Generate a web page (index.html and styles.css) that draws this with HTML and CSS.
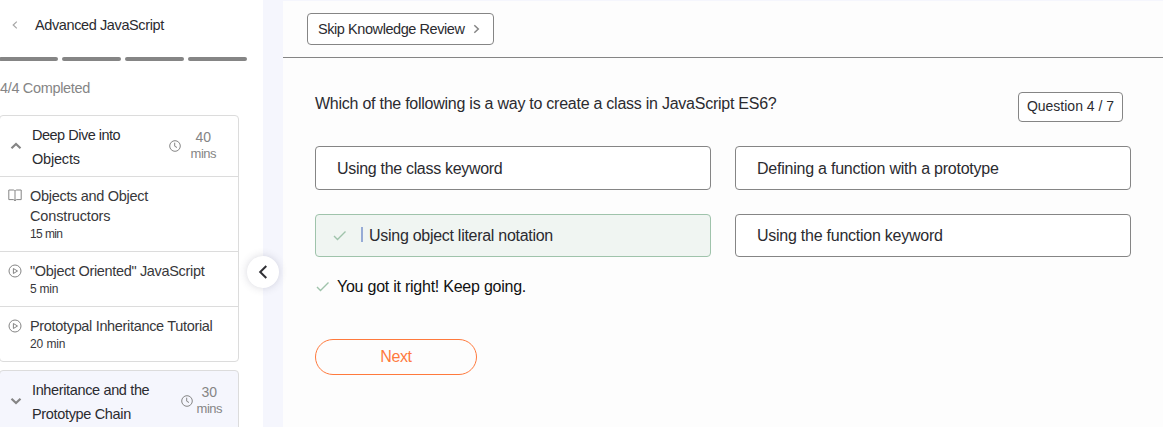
FILE: index.html
```html
<!DOCTYPE html>
<html lang="en">
<head>
<meta charset="utf-8">
<title>Advanced JavaScript</title>
<link rel="stylesheet" href="styles.css">
</head>
<body>
<div class="app">
  <aside class="sidebar">
    <header class="course">
      <svg class="back" width="6" height="8" viewBox="0 0 6 8"><path d="M4.8.6 1.2 4l3.6 3.4"/></svg>
      <h1><span class="t-course">Advanced JavaScript</span></h1>
    </header>
    <div class="progress"><i></i><i></i><i></i><i></i></div>
    <p class="completed"><span class="t-completed">4/4 Completed</span></p>

    <section class="card">
      <div class="card-head">
        <svg class="caret" width="12" height="8" viewBox="0 0 12 8"><path d="M1.5 6.2 6 2l4.5 4.2"/></svg>
        <h2><span class="t-deep">Deep Dive into</span><br><span class="t-obj">Objects</span></h2>
        <svg class="clock" width="12" height="12" viewBox="0 0 12 12"><circle cx="6" cy="6" r="5.3"/><path d="M5.7 2.7v3.5l2.3 1.3"/></svg>
        <p class="mins"><span class="t-num">40</span><br><span class="t-mins">mins</span></p>
      </div>
      <div class="lesson">
        <svg class="icon" width="14" height="13" viewBox="0 0 14 13"><path d="M7 2.2C6.6 1.3 6 1 5 1H.8v9.6H5.3c1 0 1.5.4 1.7 1.3.2-.9.7-1.3 1.7-1.3h4.5V1H9C8 1 7.4 1.3 7 2.2zv9.7"/></svg>
        <div><p class="name"><span class="t-l1">Objects and Object</span><br><span class="t-l2">Constructors</span></p><p class="time"><span class="t-15">15 min</span></p></div>
      </div>
      <div class="lesson">
        <svg class="icon" width="14" height="14" viewBox="0 0 14 14"><circle cx="7" cy="7" r="6"/><path d="M5.4 4.5v5L9.5 7z"/></svg>
        <div><p class="name"><span class="t-l3">"Object Oriented" JavaScript</span></p><p class="time"><span class="t-5">5 min</span></p></div>
      </div>
      <div class="lesson">
        <svg class="icon" width="14" height="14" viewBox="0 0 14 14"><circle cx="7" cy="7" r="6"/><path d="M5.4 4.5v5L9.5 7z"/></svg>
        <div><p class="name"><span class="t-l4">Prototypal Inheritance Tutorial</span></p><p class="time"><span class="t-20">20 min</span></p></div>
      </div>
    </section>

    <section class="card closed">
      <div class="card-head">
        <svg class="caret" width="12" height="8" viewBox="0 0 12 8"><path d="M1.5 1.8 6 6l4.5-4.2"/></svg>
        <h2><span class="t-inh">Inheritance and the</span><br><span class="t-chain">Prototype Chain</span></h2>
        <svg class="clock" width="12" height="12" viewBox="0 0 12 12"><circle cx="6" cy="6" r="5.3"/><path d="M5.7 2.7v3.5l2.3 1.3"/></svg>
        <p class="mins"><span class="t-num">30</span><br><span class="t-mins">mins</span></p>
      </div>
    </section>
  </aside>

  <div class="gutter">
    <button class="collapse"><svg width="10" height="16" viewBox="0 0 10 16"><path d="M8.3 2 2.2 8l6.1 6"/></svg></button>
  </div>

  <main class="main">
    <div class="toolbar">
      <button class="skip"><span class="t-skip">Skip Knowledge Review</span><svg width="7" height="10" viewBox="0 0 7 10"><path d="M1.3 1.2 5.3 5l-4 3.8"/></svg></button>
    </div>
    <div class="quiz">
      <div class="question">
        <p><span class="t-q">Which of the following is a way to create a class in JavaScript ES6?</span></p>
        <span class="count">Question 4 / 7</span>
      </div>
      <div class="answers">
        <div class="answer first"><span class="t-a1">Using the class keyword</span></div>
        <div class="answer first"><span class="t-a2">Defining a function with a prototype</span></div>
        <div class="answer right"><svg class="check" width="14" height="11" viewBox="0 0 14 11"><path d="M1 6 4.5 9.5 12.5 1.5"/></svg><i class="cursor"></i><span class="t-a3">Using object literal notation</span></div>
        <div class="answer"><span class="t-a4">Using the function keyword</span></div>
      </div>
      <p class="feedback"><svg class="check" width="14" height="11" viewBox="0 0 14 11"><path d="M1 6 4.5 9.5 12.5 1.5"/></svg><span class="t-fb">You got it right! Keep going.</span></p>
      <button class="next"><span class="t-next">Next</span></button>
    </div>
  </main>
</div>
</body>
</html>
```
FILE: styles.css
```css
* { box-sizing: border-box; margin: 0; padding: 0; }
body { font-family: "Liberation Sans", Arial, sans-serif; color: #2b2b30; background: #f5f6fd; }
span { white-space: nowrap; }
svg { fill: none; stroke: #858585; flex: none; }
button { font: inherit; color: inherit; background: none; }
h1, h2 { font-weight: 400; }
.app { display: flex; width: 1163px; height: 427px; overflow: hidden; }

.sidebar { width: 263px; height: 427px; background: #fff; overflow: hidden; flex: none; }
.course { display: flex; align-items: center; height: 50px; padding-left: 12px; }
.course .back { stroke: #a6a6a6; stroke-width: 1.2; }
.course h1 { margin-left: 17px; font-size: 14.5px; line-height: 20px; }
.progress { display: flex; gap: 4px; margin: 7px 0 0 -1px; }
.progress i { width: 59px; height: 4px; border-radius: 2px; background: #858585; }
.completed { margin-top: 17px; font-size: 14.5px; line-height: 20px; color: #858585; }
.card { width: 240px; margin: 17px 0 0 -1px; border: 1px solid #dcdcdc; border-radius: 4px; background: #fff; }
.card.closed { margin-top: 8px; height: 64px; background: #f5f6fd; }
.card-head { display: flex; align-items: center; height: 60px; padding: 0 22px 0 10px; }
.caret { stroke-width: 2.2; }
.card-head h2 { margin-left: 10px; padding-top: 1px; font-size: 14.5px; line-height: 24px; }
.clock { margin-left: auto; }
.mins { margin-left: 10px; padding-bottom: 1px; font-size: 13px; line-height: 16px; text-align: center; color: #858585; }
.closed .card-head { padding-right: 16px; }
.closed .mins { margin-left: 4px; padding-bottom: 1px; }
.lesson { display: flex; align-items: flex-start; border-top: 1px solid #dcdcdc; padding: 9px 0 9px 8px; color: #38383b; }
.lesson .icon { margin-top: 3px; }
.lesson > div { margin-left: 8px; }
.name { font-size: 14.5px; line-height: 20px; }
.time { font-size: 12px; line-height: 16px; }

.gutter { position: relative; width: 20px; flex: none; }
.collapse { position: absolute; left: -16px; top: 256px; width: 32px; height: 32px; display: grid; place-items: center; border: 0; border-radius: 50%; background: #fff; box-shadow: 0 0 8px rgba(60, 60, 90, .2); }
.collapse svg { stroke: #303035; stroke-width: 2; }

.main { flex: 1; margin-top: 1px; background: #fdfdfd; }
.toolbar { height: 57px; padding: 12px 0 0 24px; border-bottom: 1px solid #858585; }
.skip { display: flex; align-items: center; width: 187px; height: 32px; padding-left: 10px; border: 1px solid #858585; border-radius: 4px; background: #fff; font-size: 14.5px; }
.skip svg { margin-left: 8px; stroke-width: 1.5; }
.quiz { padding: 34px 32px 0; }
.question { display: flex; justify-content: space-between; padding-right: 8px; }
.question p { padding-top: 1px; font-size: 16px; line-height: 22px; }
.count { width: 105px; height: 30px; border: 1px solid #858585; border-radius: 4px; text-align: center; font-size: 14px; line-height: 27px; background: #fff; }
.answers { display: grid; grid-template-columns: 396px 396px; grid-template-rows: 44px 43px; gap: 24px; margin-top: 24px; }
.answer { display: flex; align-items: center; padding-left: 21px; border: 1px solid #858585; border-radius: 4px; background: #fff; font-size: 16px; }
.answer.first { padding-top: 2px; }
.answer.right { padding-left: 17px; border-color: #9fc3ab; background: #f0f5f2; }
.check { stroke: #9fc3ab; stroke-width: 1.4; }
.cursor { width: 2px; height: 15px; margin: -2px 6px 0 14px; background: #96abd6; }
.feedback { display: flex; align-items: center; margin-top: 18px; font-size: 16px; line-height: 22px; color: #111; }
.feedback .check { margin: 0 7px 0 1px; }
.feedback span { padding-top: 1px; margin-bottom: -1px; }
.next { display: block; width: 162px; height: 36px; margin-top: 42px; border: 1px solid #ff7a3d; border-radius: 18px; color: #ff7a3d; font-size: 16px; }

.t-course { letter-spacing: -.39px; }
.t-completed { letter-spacing: -.33px; }
.t-deep { letter-spacing: -.5px; }
.t-obj { letter-spacing: -.2px; }
.t-inh { letter-spacing: -.36px; }
.t-chain { letter-spacing: -.34px; }
.t-l1 { letter-spacing: -.3px; }
.t-l2 { letter-spacing: -.15px; }
.t-l3, .t-l4 { letter-spacing: -.33px; }
.t-15 { letter-spacing: -.6px; }
.t-5 { letter-spacing: -.26px; }
.t-20 { letter-spacing: -.1px; }
.t-num { font-size: 14px; }
.t-mins { letter-spacing: -.5px; }
.t-skip { letter-spacing: -.43px; }
.t-q { letter-spacing: -.25px; }
.t-a1 { letter-spacing: -.31px; }
.t-a2 { letter-spacing: -.23px; }
.t-a3 { letter-spacing: -.28px; }
.t-a4 { letter-spacing: -.25px; }
.t-fb { letter-spacing: -.24px; }
.t-next { letter-spacing: -.4px; }
```
